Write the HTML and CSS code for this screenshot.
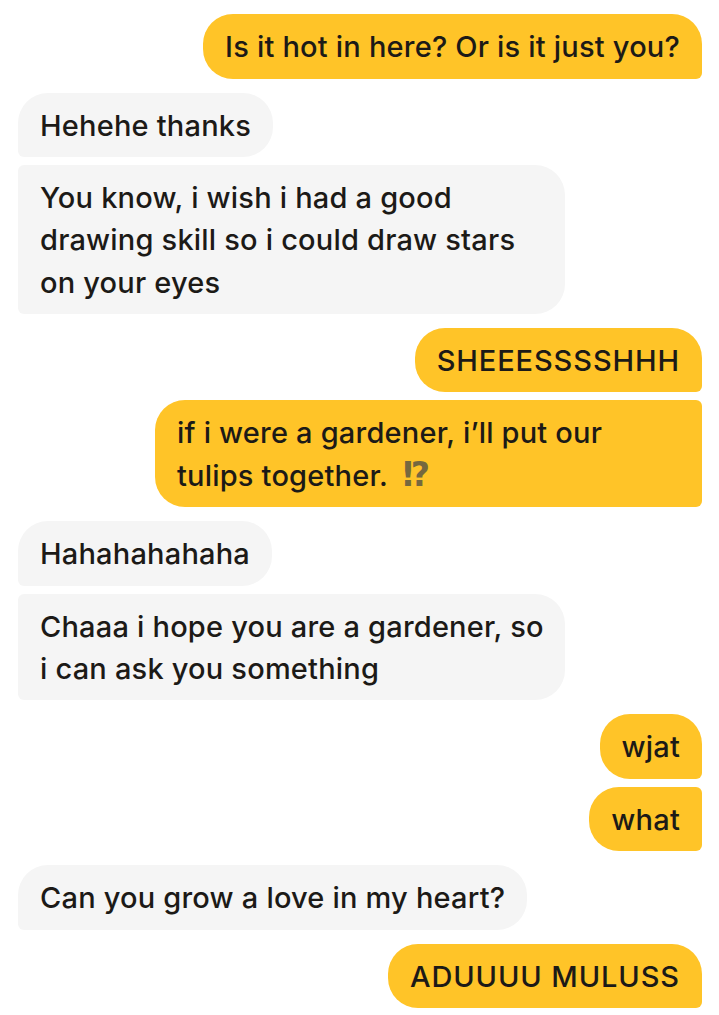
FILE: index.html
```html
<!DOCTYPE html>
<html lang="en">
<head>
    <meta charset="UTF-8">
    <meta name="viewport" content="width=device-width, initial-scale=1.0">
    <title>Chat</title>
    <link rel="stylesheet" href="styles.css">
</head>
<body>
    <div class="chat">
        <div class="group mine">
            <div class="bubble">Is it hot in here? Or is it just you?</div>
        </div>
        <div class="group theirs">
            <div class="bubble">Hehehe thanks</div>
            <div class="bubble wide">You know, i wish i had a good<br>drawing skill so i could draw stars<br>on your eyes</div>
        </div>
        <div class="group mine">
            <div class="bubble caps">SHEEESSSSHHH</div>
            <div class="bubble wide">if i were a gardener, i’ll put our<br>tulips together. <span class="emoji">⁉</span></div>
        </div>
        <div class="group theirs">
            <div class="bubble">Hahahahahaha</div>
            <div class="bubble wide">Chaaa i hope you are a gardener, so<br>i can ask you something</div>
        </div>
        <div class="group mine">
            <div class="bubble">wjat</div>
            <div class="bubble">what</div>
        </div>
        <div class="group theirs">
            <div class="bubble">Can you grow a love in my heart?</div>
        </div>
        <div class="group mine">
            <div class="bubble caps">ADUUUU MULUSS</div>
        </div>
    </div>
</body>
</html>
```

FILE: styles.css
```css
body {
    margin: 0;
    background-color: #fff;
    font-family: Inter, sans-serif;
}
.chat {
    display: flex;
    flex-direction: column;
    gap: 14.1px;
    padding: 14px 17px 0 18px;
}
.group {
    display: flex;
    flex-direction: column;
    gap: 8px;
}
.mine {
    align-items: flex-end;
}
.theirs {
    align-items: flex-start;
}
.bubble {
    box-sizing: border-box;
    min-height: 64.5px;
    padding: 12px 22px 10px;
    font-size: 29px;
    font-weight: 500;
    letter-spacing: 0.2px;
    line-height: 42.25px;
    color: #1c1a17;
    white-space: nowrap;
}
.caps {
    letter-spacing: 0.9px;
}
.mine .bubble {
    background-color: #ffc428;
    border-radius: 30px 30px 6px 30px;
}
.mine .bubble + .bubble {
    border-top-right-radius: 6px;
}
.theirs .bubble {
    background-color: #f5f5f5;
    border-radius: 30px 30px 30px 6px;
}
.theirs .bubble + .bubble {
    border-top-left-radius: 6px;
}
.wide {
    width: 547px;
}
.emoji {
    margin-left: 7px;
    font-family: "DejaVu Sans", sans-serif;
    font-size: 33px;
    font-weight: 700;
    line-height: 1;
    color: #75683f;
}
```
